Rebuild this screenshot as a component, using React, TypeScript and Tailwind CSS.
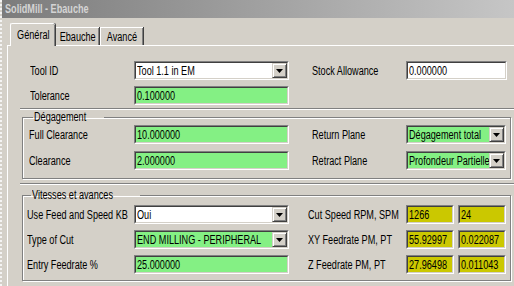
import type { ReactNode } from "react";

// the dialog is squeezed horizontally, so every text is drawn narrower than Arial
function T({ children, center }: { children: ReactNode; center?: boolean }) {
  return (
    <span
      className={`inline-block whitespace-nowrap scale-x-[0.76] ${center ? "origin-center" : "origin-left"}`}
    >
      {children}
    </span>
  );
}

function Field({
  w,
  bg,
  combo,
  children,
}: {
  w: string;
  bg: string;
  combo?: boolean;
  children: ReactNode;
}) {
  return (
    <div
      className={`${w} h-[19px] shrink-0 border border-t-[#808080] border-l-[#808080] border-b-white border-r-white`}
    >
      <div
        className={`${bg} flex h-full items-center border border-t-[#404040] border-l-[#404040] border-b-[#d4d0c8] border-r-[#d4d0c8]`}
      >
        <span className="min-w-0 flex-1 overflow-hidden whitespace-nowrap pl-[1px] text-black">
          <T>{children}</T>
        </span>
        {combo && (
          <span className="flex h-full w-[15px] shrink-0 items-center justify-center border border-t-[#d4d0c8] border-l-[#d4d0c8] border-b-[#404040] border-r-[#404040] bg-[#d4d0c8] shadow-[inset_1px_1px_0_#fff,inset_-1px_-1px_0_#808080]">
            <svg width="7" height="4" viewBox="0 0 7 4">
              <path d="M0 0h7L3.5 4z" fill="#000" />
            </svg>
          </span>
        )}
      </div>
    </div>
  );
}

function Row({
  labelW,
  label,
  field,
  rightLabel,
  rightPad = "pl-[23px]",
  right,
}: {
  labelW: string;
  label: string;
  field: ReactNode;
  rightLabel?: string;
  rightPad?: string;
  right?: ReactNode;
}) {
  return (
    <div className="flex h-[19px] items-center">
      <span className={`${labelW} shrink-0`}>
        <T>{label}</T>
      </span>
      {field}
      {rightLabel && (
        <>
          <span className={`w-[117px] shrink-0 ${rightPad}`}>
            <T>{rightLabel}</T>
          </span>
          {right}
        </>
      )}
    </div>
  );
}

function Etched({ className }: { className: string }) {
  return <div className={`${className} h-[2px] border-t border-b border-t-[#808080] border-b-white`} />;
}

function Group({ title, className, children }: { title: string; className: string; children: ReactNode }) {
  return (
    <fieldset
      className={`${className} border border-[#808080] shadow-[1px_1px_0_#fff,inset_1px_1px_0_#fff]`}
    >
      <legend className="ml-[4px] px-[1px] leading-[12px]">
        <T>{title}</T>
      </legend>
      {children}
    </fieldset>
  );
}

function Pair({ a, b }: { a: string; b: string }) {
  const yellow = "bg-[#cbc800]";
  return (
    <div className="flex gap-[4px]">
      <Field w="w-[48px]" bg={yellow}>{a}</Field>
      <Field w="w-[48px]" bg={yellow}>{b}</Field>
    </div>
  );
}

export default function App() {
  const green = "bg-[#84f084]";
  return (
    <div className="h-[286px] w-[514px] overflow-hidden border-l-2 border-dotted border-l-[#f4f4f4] bg-[#d4d0c8] font-['Liberation_Sans',Arial,sans-serif] text-[12px] text-black">
      <div className="flex h-[18px] items-center bg-gradient-to-r from-[#7c7c7c] to-[#c6c6c6] pl-[3px] font-bold text-[#d4d4d4]">
        <T>SolidMill - Ebauche</T>
      </div>

      <div className="pl-[5px] pt-[5px]">
        <div className="flex h-[22px] items-end">
          <div className="relative z-10 -mb-[1px] ml-[3px] flex h-[23px] w-[45px] items-center justify-center rounded-t-[2px] border-t border-l border-white bg-[#d4d0c8] shadow-[inset_-1px_0_0_#808080,1px_0_0_#404040]">
            <T center>Général</T>
          </div>
          <div className="flex h-[18px] w-[44px] items-center justify-center border-t border-l border-white shadow-[inset_-1px_0_0_#808080,1px_0_0_#404040]">
            <T center>Ebauche</T>
          </div>
          <div className="ml-[1px] flex h-[18px] w-[43px] items-center justify-center border-t border-l border-white shadow-[inset_-1px_0_0_#808080,1px_0_0_#404040]">
            <T center>Avancé</T>
          </div>
        </div>

        <div className="h-[250px] border-t border-l border-white pt-[15px]">
          <div className="flex flex-col gap-[6px] pl-[22px]">
            <Row
              labelW="w-[104px]"
              label="Tool ID"
              field={
                <Field w="w-[155px]" bg="bg-white" combo>
                  Tool 1.1 in EM
                </Field>
              }
              rightLabel="Stock Allowance"
              right={
                <Field w="w-[101px]" bg="bg-white">
                  0.000000
                </Field>
              }
            />
            <Row
              labelW="w-[104px]"
              label="Tolerance"
              field={
                <Field w="w-[155px]" bg={green}>
                  0.100000
                </Field>
              }
            />
          </div>

          <Etched className="ml-[12px] mt-[3px]" />

          <Group title="Dégagement" className="ml-[14px] mr-[3px] mt-[1px] h-[68px] pl-[6px]">
            <div className="flex flex-col gap-[7px] pt-[2px]">
              <Row
                labelW="w-[105px]"
                label="Full Clearance"
                field={
                  <Field w="w-[155px]" bg={green}>
                    10.000000
                  </Field>
                }
                rightLabel="Return Plane"
                right={
                  <Field w="w-[100px]" bg={green} combo>
                    Dégagement total
                  </Field>
                }
              />
              <Row
                labelW="w-[105px]"
                label="Clearance"
                field={
                  <Field w="w-[155px]" bg={green}>
                    2.000000
                  </Field>
                }
                rightLabel="Retract Plane"
                right={
                  <Field w="w-[100px]" bg={green} combo>
                    Profondeur Partielle
                  </Field>
                }
              />
            </div>
          </Group>

          <Etched className="ml-[12px] mt-[4px]" />

          <Group title="Vitesses et avances" className="ml-[14px] mr-[3px] mt-[4px] h-[92px] pl-[4px]">
            <div className="flex flex-col gap-[6px] pt-[4px]">
              <Row
                labelW="w-[107px]"
                label="Use Feed and Speed KB"
                field={
                  <Field w="w-[155px]" bg="bg-white" combo>
                    Oui
                  </Field>
                }
                rightLabel="Cut Speed RPM, SPM"
                rightPad="pl-[19px]"
                right={<Pair a="1266" b="24" />}
              />
              <Row
                labelW="w-[107px]"
                label="Type of Cut"
                field={
                  <Field w="w-[155px]" bg={green} combo>
                    END MILLING - PERIPHERAL
                  </Field>
                }
                rightLabel="XY Feedrate PM, PT"
                rightPad="pl-[19px]"
                right={<Pair a="55.92997" b="0.022087" />}
              />
              <Row
                labelW="w-[107px]"
                label="Entry Feedrate %"
                field={
                  <Field w="w-[155px]" bg={green}>
                    25.000000
                  </Field>
                }
                rightLabel="Z Feedrate PM, PT"
                rightPad="pl-[19px]"
                right={<Pair a="27.96498" b="0.011043" />}
              />
            </div>
          </Group>
        </div>
      </div>
    </div>
  );
}
